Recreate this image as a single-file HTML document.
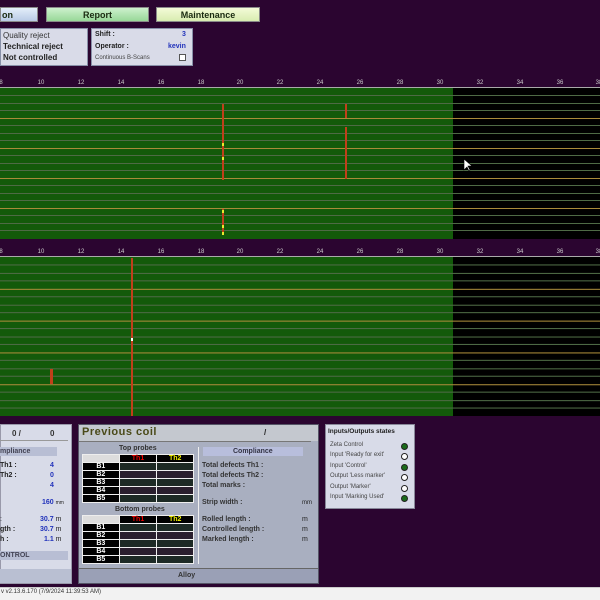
<!DOCTYPE html>
<html><head><meta charset="utf-8"><style>
*{margin:0;padding:0;box-sizing:border-box}
body{width:600px;height:600px;background:#2b0530;position:relative;overflow:hidden;font-family:"Liberation Sans",sans-serif;}
.a{position:absolute}
.btn{position:absolute;top:7px;height:15px;font-size:9px;font-weight:bold;text-align:center;line-height:14px;color:#1a2a10;border:1px solid #8a8a8a}
.t{position:absolute;font-size:7px;color:#222;white-space:nowrap}
.b{color:#2233bb;font-weight:bold}
.tbl{position:absolute;left:82px;width:112px;background:#eee;padding:1px 1px 0 1px}
.row{display:flex;height:7px;margin-bottom:1px}
.row div{height:7px}
.lab{width:36px;background:#000;color:#fff;font-size:7px;text-align:center;line-height:7px;font-weight:bold}
.c1{width:37px;margin-left:1px;background:#1d2a25}
.c2{width:36px;margin-left:1px;background:#1d2a25}
.row.alt .c1,.row.alt .c2{background:#2a1f2e}
.hd .lab{background:#ddd}
.hd .c1,.hd .c2{background:#000;font-size:7px;font-weight:bold;text-align:center;line-height:7px}
.dot{position:absolute;left:401px;width:7px;height:7px;border-radius:50%;border:1px solid #222}
</style></head><body>
<div class="btn" style="left:0;width:38px;background:linear-gradient(#e4eefa,#b9cbe6);text-align:left;padding-left:1px">on</div>
<div class="btn" style="left:46px;width:103px;background:linear-gradient(#cdf0cd,#98d898)">Report</div>
<div class="btn" style="left:156px;width:104px;background:linear-gradient(#f4fbd8,#d8ecb0)">Maintenance</div>

<div class="a" style="left:0;top:28px;width:88px;height:38px;background:#d9dbe8;border:1px solid #8890a8"></div>
<div class="t" style="left:3px;top:31px;font-size:8px;color:#333">Quality reject</div>
<div class="t" style="left:3px;top:42px;font-size:8px;color:#222;font-weight:bold">Technical reject</div>
<div class="t" style="left:3px;top:53px;font-size:8px;color:#222;font-weight:bold">Not controlled</div>

<div class="a" style="left:91px;top:28px;width:102px;height:38px;background:#d9dbe8;border:1px solid #8890a8"></div>
<div class="t" style="left:95px;top:31px;font-weight:bold">Shift :</div>
<div class="t b" style="left:182px;top:31px">3</div>
<div class="t" style="left:95px;top:43px;font-weight:bold">Operator :</div>
<div class="t b" style="left:168px;top:43px">kevin</div>
<div class="t" style="left:95px;top:55px;font-size:6px;color:#444">Continuous B-Scans</div>
<div class="a" style="left:179px;top:54px;width:7px;height:7px;background:#fff;border:1px solid #555"></div>

<svg class="a" style="left:0;top:0" width="600" height="600">
<g fill="#ccc" font-size="6" font-family="Liberation Sans" text-anchor="middle">
<text x="1" y="84">8</text><text x="41" y="84">10</text><text x="81" y="84">12</text><text x="121" y="84">14</text><text x="161" y="84">16</text><text x="201" y="84">18</text><text x="240" y="84">20</text><text x="280" y="84">22</text><text x="320" y="84">24</text><text x="360" y="84">26</text><text x="400" y="84">28</text><text x="440" y="84">30</text><text x="480" y="84">32</text><text x="520" y="84">34</text><text x="560" y="84">36</text><text x="599" y="84">38</text>
<text x="1" y="253">8</text><text x="41" y="253">10</text><text x="81" y="253">12</text><text x="121" y="253">14</text><text x="161" y="253">16</text><text x="201" y="253">18</text><text x="240" y="253">20</text><text x="280" y="253">22</text><text x="320" y="253">24</text><text x="360" y="253">26</text><text x="400" y="253">28</text><text x="440" y="253">30</text><text x="480" y="253">32</text><text x="520" y="253">34</text><text x="560" y="253">36</text><text x="599" y="253">38</text>
</g>
<rect x="0" y="87" width="600" height="1" fill="#aaa"/>
<rect x="0" y="256" width="600" height="1" fill="#aaa"/>
<rect x="0" y="88" width="453" height="151" fill="#135a0a"/>
<rect x="453" y="88" width="147" height="151" fill="#000"/>
<rect x="0" y="257" width="453" height="159" fill="#135a0a"/>
<rect x="453" y="257" width="147" height="159" fill="#000"/>
<g id="l1">
<rect x="0" y="95" width="600" height="1" fill="#4e6a45"/><rect x="0" y="103" width="600" height="1" fill="#4e6a45"/><rect x="0" y="110" width="600" height="1" fill="#4e6a45"/>
<rect x="0" y="118" width="600" height="1" fill="#a88a3a"/>
<rect x="0" y="125" width="600" height="1" fill="#4e6a45"/><rect x="0" y="133" width="600" height="1" fill="#4e6a45"/><rect x="0" y="140" width="600" height="1" fill="#4e6a45"/>
<rect x="0" y="148" width="600" height="1" fill="#a88a3a"/>
<rect x="0" y="155" width="600" height="1" fill="#4e6a45"/><rect x="0" y="163" width="600" height="1" fill="#4e6a45"/><rect x="0" y="170" width="600" height="1" fill="#4e6a45"/>
<rect x="0" y="178" width="600" height="1" fill="#a88a3a"/>
<rect x="0" y="185" width="600" height="1" fill="#4e6a45"/><rect x="0" y="193" width="600" height="1" fill="#4e6a45"/><rect x="0" y="200" width="600" height="1" fill="#4e6a45"/>
<rect x="0" y="208" width="600" height="1" fill="#a88a3a"/>
<rect x="0" y="215" width="600" height="1" fill="#4e6a45"/><rect x="0" y="223" width="600" height="1" fill="#4e6a45"/><rect x="0" y="230" width="600" height="1" fill="#4e6a45"/>
</g>
<use href="#l1" transform="translate(0,257) scale(1,1.06) translate(0,-88)"/>
<g fill="#c0401a">
<rect x="222" y="104" width="2" height="76"/><rect x="222" y="209" width="2" height="26"/>
<rect x="345" y="104" width="2" height="14"/><rect x="345" y="127" width="2" height="52"/>
<rect x="131" y="258" width="2" height="158"/><rect x="50" y="369" width="3" height="15"/>
</g>
<g fill="#e8e830"><rect x="222" y="143" width="2" height="3"/><rect x="222" y="157" width="2" height="3"/><rect x="222" y="210" width="2" height="3"/><rect x="222" y="225" width="2" height="3"/><rect x="222" y="232" width="2" height="3"/><rect x="131" y="338" width="2" height="3" fill="#fff"/></g>
<path d="M464 159 L464 170 L467 167 L469 171 L470 170 L468 166 L472 166 Z" fill="#fff" stroke="#000" stroke-width=".6"/>
</svg>

<!-- left panel -->
<div class="a" style="left:0;top:424px;width:72px;height:160px;background:#d8dbe8;border:1px solid #99a"></div>
<div class="t" style="left:12px;top:429px;font-size:8px;font-weight:bold;color:#333">0 /</div>
<div class="t" style="left:50px;top:429px;font-size:8px;font-weight:bold;color:#333">0</div>
<div class="a" style="left:0;top:440px;width:68px;height:1px;background:#999"></div>
<div class="a" style="left:0;top:447px;width:57px;height:9px;background:#b8bed4"></div>
<div class="t" style="left:0;top:448px;font-weight:bold;color:#445">mpliance</div>
<div class="t" style="left:0;top:462px;font-weight:bold">Th1 :</div><div class="t b" style="left:50px;top:462px">4</div>
<div class="t" style="left:0;top:472px;font-weight:bold">Th2 :</div><div class="t b" style="left:50px;top:472px">0</div>
<div class="t b" style="left:50px;top:482px">4</div>
<div class="t" style="left:42px;top:499px"><span class="b">160</span> <span style="font-size:5px">mm</span></div>
<div class="t" style="left:0;top:516px">:</div><div class="t" style="left:40px;top:516px"><span class="b">30.7</span> m</div>
<div class="t" style="left:0;top:526px;font-weight:bold">gth :</div><div class="t" style="left:40px;top:526px"><span class="b">30.7</span> m</div>
<div class="t" style="left:0;top:536px;font-weight:bold">h :</div><div class="t" style="left:44px;top:536px"><span class="b">1.1</span> m</div>
<div class="a" style="left:0;top:551px;width:68px;height:9px;background:#b8bed4"></div>
<div class="t" style="left:0;top:552px;font-weight:bold;color:#445">ONTROL</div>
<div class="a" style="left:0;top:569px;width:71px;height:14px;background:#b9bfd2"></div>

<!-- previous coil -->
<div class="a" style="left:78px;top:424px;width:241px;height:160px;background:#a9afc0;border:1px solid #556"></div>
<div class="a" style="left:79px;top:425px;width:239px;height:16px;background:#c4c8cf"></div>
<div class="t" style="left:82px;top:426px;font-size:11px;font-weight:bold;color:#4a4a18;letter-spacing:.5px">Previous coil</div>
<div class="t" style="left:264px;top:428px;font-size:8px;font-weight:bold">/</div>
<div class="a" style="left:79px;top:441px;width:232px;height:1px;background:#777"></div>
<div class="t" style="left:119px;top:445px;font-weight:bold;color:#333">Top probes</div>
<div class="tbl" style="top:454px">
<div class="row hd"><div class="lab"></div><div class="c1" style="color:#e00">Th1</div><div class="c2" style="color:#ee0">Th2</div></div>
<div class="row"><div class="lab">B1</div><div class="c1"></div><div class="c2"></div></div>
<div class="row alt"><div class="lab">B2</div><div class="c1"></div><div class="c2"></div></div>
<div class="row"><div class="lab">B3</div><div class="c1"></div><div class="c2"></div></div>
<div class="row alt"><div class="lab">B4</div><div class="c1"></div><div class="c2"></div></div>
<div class="row"><div class="lab">B5</div><div class="c1"></div><div class="c2"></div></div>
</div>
<div class="t" style="left:115px;top:506px;font-weight:bold;color:#333">Bottom probes</div>
<div class="tbl" style="top:515px">
<div class="row hd"><div class="lab"></div><div class="c1" style="color:#e00">Th1</div><div class="c2" style="color:#ee0">Th2</div></div>
<div class="row"><div class="lab">B1</div><div class="c1"></div><div class="c2"></div></div>
<div class="row alt"><div class="lab">B2</div><div class="c1"></div><div class="c2"></div></div>
<div class="row"><div class="lab">B3</div><div class="c1"></div><div class="c2"></div></div>
<div class="row alt"><div class="lab">B4</div><div class="c1"></div><div class="c2"></div></div>
<div class="row"><div class="lab">B5</div><div class="c1"></div><div class="c2"></div></div>
</div>
<div class="a" style="left:198px;top:447px;width:1px;height:117px;background:#eee"></div>
<div class="a" style="left:203px;top:447px;width:100px;height:9px;background:#b8bedc"></div>
<div class="t" style="left:233px;top:448px;font-weight:bold;color:#334">Compliance</div>
<div class="t" style="left:202px;top:462px;font-weight:bold;color:#333">Total defects Th1 :</div>
<div class="t" style="left:202px;top:472px;font-weight:bold;color:#333">Total defects Th2 :</div>
<div class="t" style="left:202px;top:482px;font-weight:bold;color:#333">Total marks :</div>
<div class="t" style="left:202px;top:499px;font-weight:bold;color:#333">Strip width :</div><div class="t" style="left:302px;top:500px;font-size:6px">mm</div>
<div class="t" style="left:202px;top:516px;font-weight:bold;color:#333">Rolled length :</div><div class="t" style="left:302px;top:516px">m</div>
<div class="t" style="left:202px;top:526px;font-weight:bold;color:#333">Controlled length :</div><div class="t" style="left:302px;top:526px">m</div>
<div class="t" style="left:202px;top:536px;font-weight:bold;color:#333">Marked length :</div><div class="t" style="left:302px;top:536px">m</div>
<div class="a" style="left:79px;top:568px;width:239px;height:1px;background:#666"></div>
<div class="a" style="left:79px;top:569px;width:239px;height:14px;background:#9aa0b6"></div>
<div class="t" style="left:178px;top:572px;font-weight:bold;color:#333">Alloy</div>

<!-- IO -->
<div class="a" style="left:325px;top:424px;width:90px;height:85px;background:#d8dbe8;border:1px solid #889"></div>
<div class="t" style="left:328px;top:428px;font-size:6.5px;font-weight:bold">Inputs/Outputs states</div>
<div class="t" style="left:330px;top:442px;font-size:6px;color:#444">Zeta Control</div>
<div class="t" style="left:330px;top:452px;font-size:6px;color:#444">Input 'Ready for exit'</div>
<div class="t" style="left:330px;top:463px;font-size:6px;color:#444">Input 'Control'</div>
<div class="t" style="left:330px;top:473px;font-size:6px;color:#444">Output 'Less marker'</div>
<div class="t" style="left:330px;top:484px;font-size:6px;color:#444">Output 'Marker'</div>
<div class="t" style="left:330px;top:494px;font-size:6px;color:#444">Input 'Marking Used'</div>
<div class="dot" style="top:443px;background:#1a6a1a"></div>
<div class="dot" style="top:453px;background:#fff"></div>
<div class="dot" style="top:464px;background:#1a6a1a"></div>
<div class="dot" style="top:474px;background:#fff"></div>
<div class="dot" style="top:485px;background:#fff"></div>
<div class="dot" style="top:495px;background:#1a6a1a"></div>

<div class="a" style="left:0;top:587px;width:600px;height:13px;background:#f2f2f2;border-top:1px solid #ccc"></div>
<div class="t" style="left:1px;top:589px;font-size:6px;color:#333">v v2.13.6.170 (7/9/2024 11:39:53 AM)</div>
</body></html>
